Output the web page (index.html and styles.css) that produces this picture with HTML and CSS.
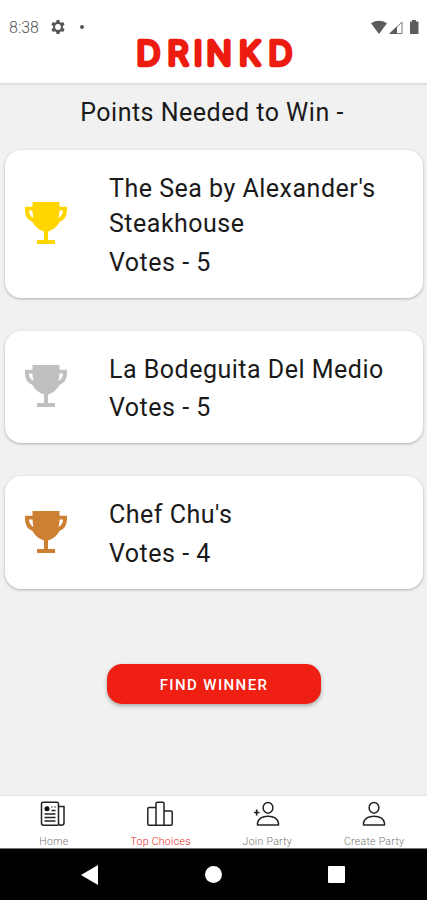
FILE: index.html
```html
<!DOCTYPE html>
<html lang="en">
<head>
  <meta charset="UTF-8">
  <title>Drinkd - Top Choices</title>
  <meta name="viewport" content="width=device-width, initial-scale=1.0">
  <link rel="stylesheet" href="styles.css">
</head>
<body>
  <svg width="0" height="0" class="defs">
    <symbol id="trophy" viewBox="0 0 42 42">
      <path fill="currentColor" fill-rule="evenodd" d="M7.500 0H34.500V4.700H42V8Q42 17 34.500 20Q31 27 23 29.500V38H30V42H12V38H19V29.500Q11 27 7.500 20Q0 17 0 8V4.700H7.500ZM4 8.500Q4 13 8.500 16Q7.500 12 7.500 8.500ZM38 8.500H34.500Q34.500 12 33.500 16Q38 13 38 8.500Z"/>
    </symbol>
    <symbol id="person" viewBox="0 0 24 26">
      <g fill="none" stroke="#222" stroke-width="1.500">
        <ellipse cx="12" cy="6.800" rx="4.900" ry="5.400"/>
        <path d="M1.500 24V22Q3 15.200 12 15.200T22.500 22V24Z" stroke-linejoin="round"/>
      </g>
    </symbol>
  </svg>

  <header class="header">
    <div class="status">
      <span class="time">8:38</span>
      <svg class="gear" width="14" height="14" viewBox="0 0 24 24">
        <path fill="#555" fill-rule="evenodd" d="M9.500 0h5l.6 3.500 2.200 1.200L20.700 3.400 23.300 8l-2.900 2.400v3.200L23.300 16l-2.600 4.600-3.400-1.300-2.200 1.200L14.500 24h-5l-.6-3.500-2.200-1.200-3.400 1.300L.7 16l2.900-2.400v-3.200L.7 8l2.600-4.600 3.400 1.300 2.200-1.200ZM12 7a5 5 0 1 0 0 10a5 5 0 1 0 0-10Z"/>
      </svg>
      <span class="dot"></span>
      <svg class="signals" width="49" height="15" viewBox="0 0 49 15">
        <path fill="#5c5c5c" d="M0 3.200Q8 -1.500 16 3.200L8 14Z"/>
        <path fill="none" stroke="#777" d="M19 13.500L31 2V13.500Z"/>
        <path fill="#5c5c5c" d="M18 14L26 6.500V14Z"/>
        <path fill="#5c5c5c" d="M39 1.500H41V0H45V1.500H47.500V14H39Z"/>
      </svg>
    </div>
    <svg class="logo" width="164" height="46" viewBox="0 0 164 46">
      <text x="4.500 35.500 61.700 74.500 107 136.500" y="29">DRINKD</text>
    </svg>
  </header>

  <main class="content">
    <h1 class="points">Points Needed to Win -</h1>

    <div class="card">
      <svg class="trophy gold"><use href="#trophy"/></svg>
      <div class="info">
        <p class="name">The Sea by Alexander's Steakhouse</p>
        <p class="votes">Votes - 5</p>
      </div>
    </div>
    <div class="card">
      <svg class="trophy silver"><use href="#trophy"/></svg>
      <div class="info">
        <p class="name">La Bodeguita Del Medio</p>
        <p class="votes">Votes - 5</p>
      </div>
    </div>
    <div class="card">
      <svg class="trophy bronze"><use href="#trophy"/></svg>
      <div class="info">
        <p class="name">Chef Chu's</p>
        <p class="votes">Votes - 4</p>
      </div>
    </div>

    <button class="winner">FIND WINNER</button>
  </main>

  <nav class="tabs">
    <a class="tab">
      <svg width="26" height="26" viewBox="0 0 26 26" fill="none" stroke="#222" stroke-width="1.500">
        <path d="M18.500 24.200H3.500Q1.500 24.200 1.500 22V3Q1.500 1.300 3 1.300H17Q18.500 1.300 18.500 3V22Q18.500 24.200 21 24.200Q24 24.200 24 22V5.500H18.500"/>
        <path d="M11.500 6H12.500M14.500 6H15.500M11.500 9.500H15.500M4.500 13H15.500M4.500 16.500H15.500M4.500 20H15.500"/>
        <circle cx="7" cy="7.800" r="2.500" fill="#111" stroke="none"/>
      </svg>
      <span>Home</span>
    </a>
    <a class="tab active">
      <svg width="26" height="26" viewBox="0 0 26 26" fill="none" stroke="#222" stroke-width="1.500">
        <path d="M9 24.200H2Q.8 24.200.8 23V7.500Q.8 6.500 2 6.500H9M9 24.200V2.500Q9 1.300 10.200 1.300H15.800Q17 1.300 17 2.500V24.200ZM17 10H24Q25.200 10 25.200 11V23Q25.200 24.200 24 24.200H17"/>
      </svg>
      <span>Top Choices</span>
    </a>
    <a class="tab">
      <svg width="26" height="26" viewBox="0 0 26 26">
        <use href="#person" x="2" width="24" height="26"/>
        <path d="M0 11.500H5.500M2.700 8.500V14.500" stroke="#222" stroke-width="1.700"/>
      </svg>
      <span>Join Party</span>
    </a>
    <a class="tab">
      <svg width="24" height="26"><use href="#person"/></svg>
      <span>Create Party</span>
    </a>
  </nav>

  <footer class="system">
    <svg width="17" height="20" viewBox="0 0 17 20"><path fill="#fff" d="M17 0V20L0 10Z"/></svg>
    <span class="circle"></span>
    <span class="square"></span>
  </footer>
</body>
</html>
```

FILE: styles.css
```css
* {
  box-sizing: border-box;
}

body {
  margin: 0;
  height: 900px;
  display: flex;
  flex-direction: column;
  font-family: Roboto, sans-serif;
  background: #f1f1f1;
  color: #1a1a1a;
}

.defs {
  position: absolute;
}

.header {
  height: 84px;
  background: #fff;
  border-bottom: 1px solid #dcdcdc;
  box-shadow: 0 1px 1px #e2e2e2;
  padding-top: 18px;
}

.status {
  display: flex;
  align-items: center;
  height: 18px;
  padding: 0 7px 0 9px;
}

.time {
  width: 42px;
  font-size: 16px;
  font-weight: 300;
  color: #555;
}

.dot {
  width: 4px;
  height: 4px;
  margin-left: 15px;
  border-radius: 50%;
  background: #555;
}

.signals {
  margin-left: auto;
}

.logo {
  display: block;
  margin: 0 auto;
  overflow: visible;
}

.logo text {
  font-family: Inter, sans-serif;
  font-size: 33px;
  font-weight: 300;
  fill: #ed1c10;
  stroke: #ed1c10;
  stroke-width: 4.5px;
  stroke-linejoin: round;
}

.content {
  flex: 1;
  display: flex;
  flex-direction: column;
  padding: 11px 4px 0 5px;
}

.points {
  margin: 0 4px 20px 0;
  line-height: 35px;
  text-align: center;
  font-size: 25px;
  font-weight: 400;
  letter-spacing: 0.5px;
}

.card {
  display: flex;
  align-items: center;
  margin-bottom: 33px;
  padding: 21px 20px 18px;
  background: #fff;
  border-radius: 16px;
  box-shadow: 0 1px 3px rgba(0, 0, 0, 0.28);
}

.trophy {
  width: 42px;
  height: 42px;
  flex: none;
  margin: -4px 42px 0 0;
}

.gold {
  color: #ffd600;
}

.silver {
  color: #c0c0c0;
}

.bronze {
  color: #cd7f32;
}

.info p {
  margin: 0;
  font-size: 25px;
  font-weight: 400;
  line-height: 35px;
  letter-spacing: 0.5px;
}

.info .votes {
  margin-top: 3.5px;
}

.winner {
  align-self: center;
  width: 214px;
  height: 40px;
  margin-top: 42px;
  padding-top: 3px;
  border: none;
  border-radius: 15px;
  background: #ef2013;
  color: #fff;
  font-family: Roboto, sans-serif;
  font-size: 15px;
  font-weight: 500;
  letter-spacing: 1.4px;
  box-shadow: 0 2px 4px rgba(0, 0, 0, 0.3);
}

.tabs {
  display: flex;
  height: 54px;
  background: #fff;
  border-top: 1px solid #e4e4e4;
  border-bottom: 1px solid #777;
}

.tab {
  flex: 1;
  display: flex;
  flex-direction: column;
  align-items: center;
  padding-top: 5px;
  font-size: 10.5px;
  font-weight: 300;
  line-height: 12px;
  letter-spacing: 0.3px;
  color: #777;
}

.tab span {
  margin: 9px 0 0 1px;
}

.active {
  color: #ed1c24;
}

.system {
  display: flex;
  align-items: center;
  justify-content: space-between;
  height: 51px;
  padding: 0 82px 0 81px;
  background: #000;
}

.circle {
  width: 17px;
  height: 17px;
  border-radius: 50%;
  background: #fff;
}

.square {
  width: 17px;
  height: 17px;
  border-radius: 1px;
  background: #fff;
}
```
